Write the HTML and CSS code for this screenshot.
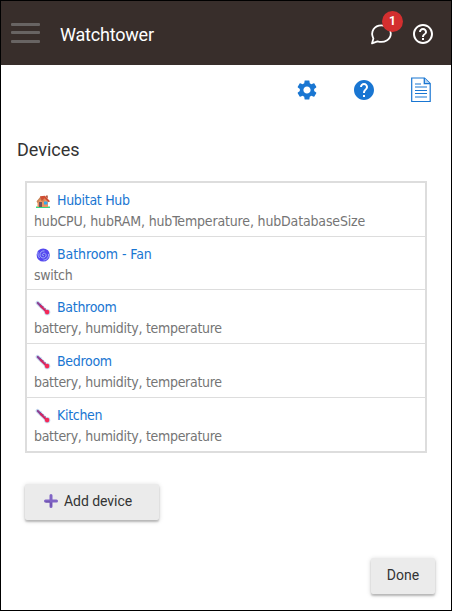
FILE: index.html
```
<!DOCTYPE html>
<html lang="en">
<head>
<meta charset="utf-8">
<title>Watchtower</title>
<link rel="stylesheet" href="styles.css">
</head>
<body>
<svg width="0" height="0" class="defs">
  <symbol id="thermo" viewBox="0 0 16 16">
    <path d="M2.600 2.800 L11.500 11.600" stroke="#c5daf0" stroke-width="4" stroke-linecap="round"/>
    <circle cx="12.200" cy="12.200" r="3.100" fill="#c5daf0"/>
    <path d="M2.800 3 L7 7.200" stroke="#8d4093" stroke-width="2.200" stroke-linecap="round"/>
    <path d="M5.800 6 L11.500 11.700" stroke="#d82560" stroke-width="2.200" stroke-linecap="round"/>
    <circle cx="12.100" cy="12.100" r="2.300" fill="#f42958"/>
    <path d="M6 3.800 L4.800 5 M8.400 6.200 L7.200 7.400 M10.600 8.400 L9.400 9.600" stroke="#70429b" stroke-width=".8"/>
  </symbol>
</svg>
<div class="window">
  <header class="topbar">
    <div class="menu"><i></i><i></i><i></i></div>
    <h1>Watchtower</h1>
    <div class="chat">
      <svg width="24" height="24" viewBox="0 0 24 24" fill="none" stroke="#fff" stroke-width="1.800" stroke-linejoin="round"><path d="M3 21.400 L4.400 16.600 C1 9.500 5.400 3.400 12.400 3.400 C17.900 3.400 21.800 7.100 21.800 11.500 C21.800 17.500 15.400 21.500 8.500 19.300 Z"/></svg>
      <span class="badge">1</span>
    </div>
    <svg class="help" width="24" height="24" viewBox="0 0 24 24" fill="#fff"><path d="M11 18h2v-2h-2v2zm1-16C6.480 2 2 6.480 2 12s4.480 10 10 10 10-4.480 10-10S17.520 2 12 2zm0 18c-4.410 0-8-3.590-8-8s3.590-8 8-8 8 3.590 8 8-3.590 8-8 8zm0-14c-2.210 0-4 1.790-4 4h2c0-1.100.9-2 2-2s2 .9 2 2c0 2-3 1.750-3 5h2c0-2.250 3-2.500 3-5 0-2.210-1.790-4-4-4z"/></svg>
  </header>
  <nav class="tools">
    <svg width="24" height="24" viewBox="0 0 24 24" fill="#1976d2"><path d="M19.140 12.940c.04-.3.060-.61.060-.94 0-.32-.02-.64-.07-.94l2.030-1.580c.18-.14.230-.41.120-.61l-1.920-3.320c-.12-.22-.37-.29-.59-.22l-2.390.960c-.5-.38-1.030-.7-1.620-.94L14.400 2.810c-.04-.24-.24-.41-.48-.41h-3.840c-.24 0-.43.170-.47.410L9.250 5.350c-.59.240-1.130.570-1.620.940L5.240 5.330c-.22-.08-.47 0-.59.220L2.740 8.870c-.12.210-.08.470.12.610l2.030 1.580c-.05.300-.09.630-.09.940s.02.640.07.940l-2.030 1.580c-.18.140-.23.410-.12.610l1.920 3.320c.12.220.37.290.59.220l2.390-.96c.5.380 1.030.7 1.620.940l.36 2.540c.05.240.24.410.48.410h3.840c.24 0 .44-.17.470-.41l.36-2.540c.59-.24 1.130-.56 1.620-.94l2.390.960c.22.080.47 0 .59-.22l1.920-3.320c.12-.22.070-.47-.12-.61l-2.010-1.580zM12 15.600c-1.980 0-3.600-1.620-3.600-3.600s1.620-3.600 3.600-3.600 3.600 1.620 3.600 3.600-1.620 3.600-3.600 3.600z"/></svg>
    <svg width="24" height="24" viewBox="0 0 24 24" fill="#1976d2"><path d="M12 2C6.480 2 2 6.480 2 12s4.480 10 10 10 10-4.480 10-10S17.520 2 12 2zm1 17h-2v-2h2v2zm2.070-7.750l-.9.920C13.450 12.900 13 13.500 13 15h-2v-.5c0-1.100.45-2.100 1.170-2.830l1.240-1.260c.37-.36.590-.86.590-1.410 0-1.100-.9-2-2-2s-2 .9-2 2H8c0-2.210 1.790-4 4-4s4 1.790 4 4c0 .88-.36 1.680-.93 2.250z"/></svg>
    <svg class="doc" width="20" height="26" viewBox="0 0 20 26" fill="none" stroke="#1976d2"><path d="M.7 1 H13.500 L19.200 6.500 V24.500 H.7Z" stroke-width="1.200"/><path d="M13.300 1 V6.700 H19" fill="#b9d6f2" stroke-width="1.300"/><path d="M4 7H10 M4 10H16 M4 13.500H16 M4 16.500H16 M4 20H16" stroke-width="1.200"/></svg>
  </nav>
  <main>
    <h2>Devices</h2>
    <ul class="devices">
      <li><a><svg width="16" height="16" viewBox="0 0 16 16"><path d="M1 13.500H15V15H1Z" fill="#35d982"/><path d="M2.500 7.500L8 3 13 8V14H2.500Z" fill="#ed9461"/><path d="M1.500 8.500L5.500 3.500 10 7 8 9 5 6.500 2.500 10Z" fill="#c98558"/><path d="M5 3.200L10 2.800 15 8.200 13.700 9.200 9.300 5.200 6.800 8Z" fill="#cf4d32"/><path d="M11 2.500H12.800V5.500L11 4Z" fill="#b85a40"/><path d="M4 9H7V14H4Z" fill="#70545c"/><path d="M9 8.500H12.500V11.500H9Z" fill="#36a9ea"/></svg><span>Hubitat Hub</span></a><p class="hub">hubCPU, hubRAM, hubTemperature, hubDatabaseSize</p></li>
      <li><a><svg width="16" height="16" viewBox="0 0 16 16"><circle cx="8.200" cy="8" r="6.600" fill="#5548ef"/><path d="M9 8.500C7.500 9.300 6.800 7.500 8 6.600 9.800 5.400 11.700 7.400 10.900 9.200 9.700 11.900 5.500 11.300 5 8.200 4.600 5.500 7 3.500 9.500 3.900M13.500 7C14 10.500 11.500 13 8.500 13M3 5C2.500 7.500 3.400 9.500 4.600 11" fill="none" stroke="#b5c9fa" stroke-width=".8"/></svg><span class="fan">Bathroom - Fan</span></a><p>switch</p></li>
      <li><a><svg width="16" height="16"><use href="#thermo"/></svg><span>Bathroom</span></a><p>battery, humidity, temperature</p></li>
      <li><a><svg width="16" height="16"><use href="#thermo"/></svg><span>Bedroom</span></a><p>battery, humidity, temperature</p></li>
      <li><a><svg width="16" height="16"><use href="#thermo"/></svg><span>Kitchen</span></a><p>battery, humidity, temperature</p></li>
    </ul>
    <button class="add"><svg width="14" height="14" viewBox="0 0 14 14"><path d="M1.500 7H12.500M7 1.500V12.500" stroke="#8064c5" stroke-width="3" stroke-linecap="round"/><path d="M7 8.500V12.500M1.500 8H6" stroke="#6546a2" stroke-width="1"/></svg>Add device</button>
    <button class="done">Done</button>
  </main>
</div>
</body>
</html>
```
FILE: styles.css
```
* { box-sizing: border-box; }
body { margin: 0; font-family: Roboto, sans-serif; color: #333; background: #fff; }
.defs { position: absolute; }
.window { height: 611px; border: 1px solid #000; display: flex; flex-direction: column; }
.topbar { height: 64px; background: #382e2b; display: flex; align-items: center; padding: 2px 16px 0 10px; }
.menu { width: 29px; height: 20px; display: flex; flex-direction: column; justify-content: space-between; margin-top: -3px; }
.menu i { height: 3px; border-radius: 1px; background: #686463; }
h1 { margin: 2px auto 0 20px; font-size: 18px; font-weight: 400; line-height: 24px; letter-spacing: -.2px; color: #fff; }
.chat { position: relative; width: 24px; height: 24px; margin-right: 18px; }
.chat svg, .help { display: block; }
.badge { position: absolute; left: 13px; top: -11px; width: 21px; height: 21px; border-radius: 50%; background: #d32f2f; color: #fff; font-size: 12px; font-weight: 700; line-height: 20px; text-align: center; }
.tools { display: flex; align-items: center; height: 50px; padding-right: 20px; justify-content: flex-end; }
.tools svg + svg { margin-left: 33px; }
.tools .doc { margin-left: 35px; }
main { flex: 1; display: flex; flex-direction: column; align-items: flex-start; }
h2 { margin: 23px 0 0 16px; font-size: 18px; line-height: 24px; font-weight: 400; }
.devices { list-style: none; margin: 19px 0 0 24px; padding: 0; width: 402px; height: 272px; border: 2px solid #ddd; font-family: "DejaVu Sans Condensed", "DejaVu Sans", sans-serif; font-stretch: condensed; font-size: 14px; letter-spacing: -.3px; display: grid; grid-template-rows: 54px 53px 54px 54px 53px; }
.devices li { padding: 7px 7px 0; border-bottom: 1px solid #ddd; line-height: 21px; white-space: nowrap; }
.devices li:last-child { border-bottom: 0; }
.devices a { display: flex; align-items: center; gap: 6px; padding-left: 1px; color: #1976d2; }
.devices p { margin: 0; color: #757575; }
.devices .hub { letter-spacing: -.16px; }
.devices .fan { letter-spacing: -.1px; }
button { border: 0; border-radius: 2px; background: #ebebeb; color: #333; font: 14px/20px Roboto, sans-serif; height: 36px; padding: 0 16px; box-shadow: 0 2px 2px rgba(0,0,0,.2), 0 1px 5px rgba(0,0,0,.18); }
.add { width: 134px; margin: 31px 0 0 24px; display: flex; align-items: center; gap: 6px; padding: 0 0 2px 19px; letter-spacing: -.05px; }
.done { width: 64px; margin: 38px 16px 0 auto; padding: 0 0 2px; }
```
